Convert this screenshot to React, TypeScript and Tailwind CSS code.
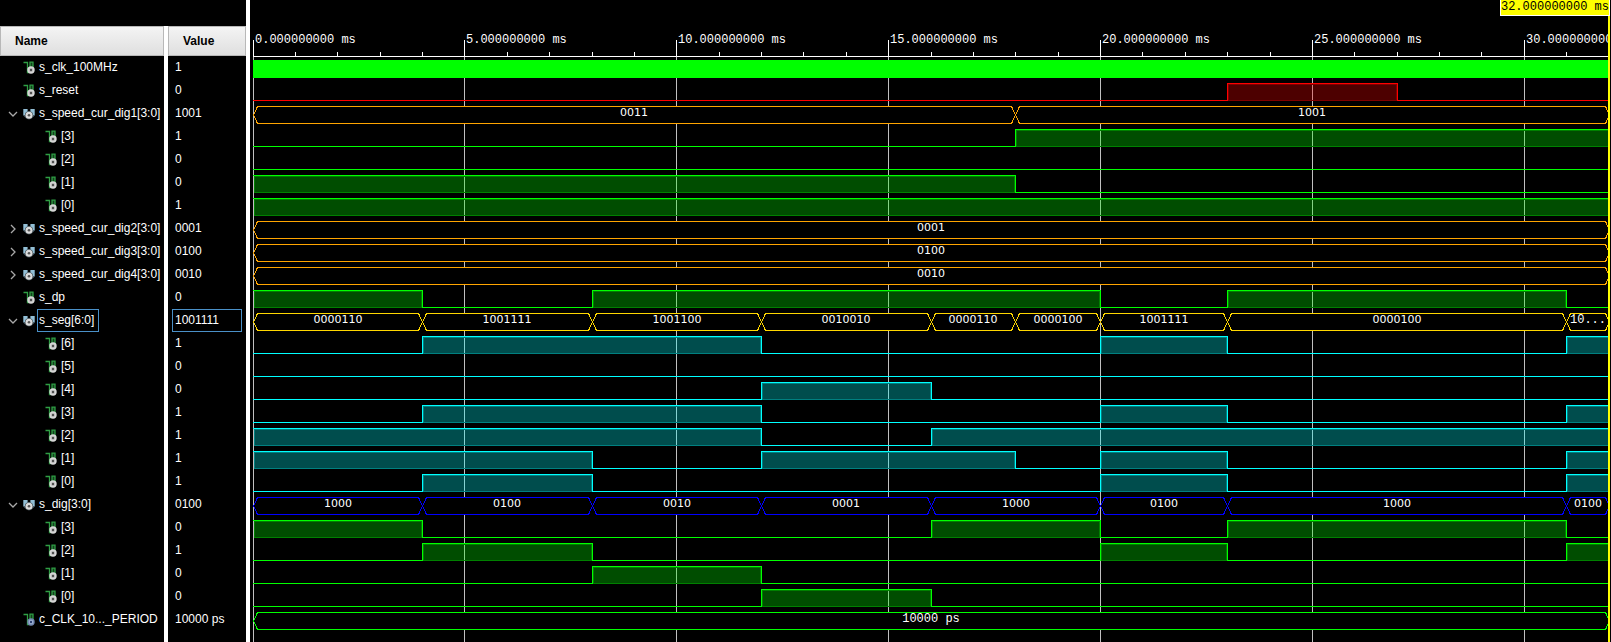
import { useLayoutEffect, useRef, useState } from "react";

type Tone = { line: string; soft: string };

const GREEN: Tone = { line: "#00ff00", soft: "#008000" };
const RED: Tone = { line: "#ff0000", soft: "#800000" };
const CYAN: Tone = { line: "#00ffff", soft: "#008080" };
const ORANGE: Tone = { line: "#ffa500", soft: "#805200" };
const GOLD: Tone = { line: "#ffd700", soft: "#806b00" };
const BLUE: Tone = { line: "#0000ff", soft: "#000080" };

type Wave =
  | { kind: "clock"; tone: Tone }
  | { kind: "bit"; tone: Tone; high: [number, number][] }
  | { kind: "bus"; tone: Tone; parts: [number, number, string][] };

type Signal = {
  name: string;
  value: string;
  icon: "bit" | "bus" | "const";
  depth: 0 | 1;
  open?: boolean;
  selected?: boolean;
  wave: Wave;
};

const END = 32;

const bit = (name: string, value: string, tone: Tone, high: [number, number][], depth: 0 | 1 = 1): Signal => ({
  name,
  value,
  icon: "bit",
  depth,
  wave: { kind: "bit", tone, high },
});

const bus = (
  name: string,
  value: string,
  tone: Tone,
  parts: [number, number, string][],
  open: boolean,
  selected = false,
): Signal => ({ name, value, icon: "bus", depth: 0, open, selected, wave: { kind: "bus", tone, parts } });

const SIGNALS: Signal[] = [
  { name: "s_clk_100MHz", value: "1", icon: "bit", depth: 0, wave: { kind: "clock", tone: GREEN } },
  bit("s_reset", "0", RED, [[23, 27]], 0),
  bus("s_speed_cur_dig1[3:0]", "1001", ORANGE, [[0, 18, "0011"], [18, END, "1001"]], true),
  bit("[3]", "1", GREEN, [[18, END]]),
  bit("[2]", "0", GREEN, []),
  bit("[1]", "0", GREEN, [[0, 18]]),
  bit("[0]", "1", GREEN, [[0, END]]),
  bus("s_speed_cur_dig2[3:0]", "0001", ORANGE, [[0, END, "0001"]], false),
  bus("s_speed_cur_dig3[3:0]", "0100", ORANGE, [[0, END, "0100"]], false),
  bus("s_speed_cur_dig4[3:0]", "0010", ORANGE, [[0, END, "0010"]], false),
  bit("s_dp", "0", GREEN, [[0, 4], [8, 20], [23, 31]], 0),
  bus(
    "s_seg[6:0]",
    "1001111",
    GOLD,
    [
      [0, 4, "0000110"],
      [4, 8, "1001111"],
      [8, 12, "1001100"],
      [12, 16, "0010010"],
      [16, 18, "0000110"],
      [18, 20, "0000100"],
      [20, 23, "1001111"],
      [23, 31, "0000100"],
      [31, END, "10..."],
    ],
    true,
    true,
  ),
  bit("[6]", "1", CYAN, [[4, 12], [20, 23], [31, END]]),
  bit("[5]", "0", CYAN, []),
  bit("[4]", "0", CYAN, [[12, 16]]),
  bit("[3]", "1", CYAN, [[4, 12], [20, 23], [31, END]]),
  bit("[2]", "1", CYAN, [[0, 12], [16, END]]),
  bit("[1]", "1", CYAN, [[0, 8], [12, 18], [20, 23], [31, END]]),
  bit("[0]", "1", CYAN, [[4, 8], [20, 23], [31, END]]),
  bus(
    "s_dig[3:0]",
    "0100",
    BLUE,
    [
      [0, 4, "1000"],
      [4, 8, "0100"],
      [8, 12, "0010"],
      [12, 16, "0001"],
      [16, 20, "1000"],
      [20, 23, "0100"],
      [23, 31, "1000"],
      [31, END, "0100"],
    ],
    true,
  ),
  bit("[3]", "0", GREEN, [[0, 4], [16, 20], [23, 31]]),
  bit("[2]", "1", GREEN, [[4, 8], [20, 23], [31, END]]),
  bit("[1]", "0", GREEN, [[8, 12]]),
  bit("[0]", "0", GREEN, [[12, 16]]),
  {
    name: "c_CLK_10..._PERIOD",
    value: "10000 ps",
    icon: "const",
    depth: 0,
    wave: { kind: "bus", tone: GREEN, parts: [[0, END, "10000 ps"]] },
  },
];

function BitIcon({ constant = false }: { constant?: boolean }) {
  return (
    <svg width="12" height="13" viewBox="0 0 12 13" className="shrink-0" aria-hidden="true">
      <path d="M0.5 1.5H4.5V11.5H6" fill="none" stroke="#2f9e44" strokeWidth="1.3" />
      <path d="M7 7V1.2H10V7" fill="#14401d" stroke="#2f9e44" strokeWidth="1.3" />
      <circle cx="8" cy="9" r="3.7" fill={constant ? "#7388b0" : "#d8d8d8"} />
      <circle cx="8" cy="9" r="2.3" fill={constant ? "#9fb2d6" : "#c4c4c4"} />
      <circle cx="8" cy="9" r="1.2" fill={constant ? "#2c3f70" : "#4d4d4d"} />
    </svg>
  );
}

function BusIcon() {
  return (
    <svg width="12" height="12" viewBox="0 0 12 12" className="shrink-0" aria-hidden="true">
      <path d="M0.3 1H4.6V3.5H7.4V1H11.7V7.6H0.3Z" fill="#93bfd6" />
      <path d="M0.3 7.6H11.7L9.6 9.6H2.4Z" fill="#4f6672" />
      <circle cx="6" cy="7.3" r="4.1" fill="#3f4a50" />
      <circle cx="6" cy="7.3" r="3.5" fill="#dcdcdc" />
      <circle cx="6" cy="7.3" r="1.3" fill="#555555" />
    </svg>
  );
}

function Chevron({ open }: { open: boolean }) {
  return (
    <svg width="10" height="10" viewBox="0 0 10 10" fill="none" stroke="#a8a8a8" strokeWidth="1.3" aria-hidden="true">
      <path d={open ? "M1 3L5 7L9 3" : "M3 1L7 5L3 9"} />
    </svg>
  );
}

function NameCell({ signal }: { signal: Signal }) {
  return (
    <div className={`flex h-[23px] items-center ${signal.depth === 1 ? "pl-[45px]" : "pl-2"}`}>
      {signal.depth === 0 &&
        (signal.open === undefined ? (
          <span className="w-[15px] shrink-0" />
        ) : (
          <button
            type="button"
            aria-label={`${signal.open ? "Collapse" : "Expand"} ${signal.name}`}
            className="flex w-[15px] shrink-0 items-center"
          >
            <Chevron open={signal.open} />
          </button>
        ))}
      {signal.icon === "bus" ? <BusIcon /> : <BitIcon constant={signal.icon === "const"} />}
      <span
        className={`ml-[2px] flex h-[23px] items-center border pb-px pl-px whitespace-nowrap ${
          signal.selected ? "border-[#4a90c8] pr-1" : "border-transparent"
        }`}
      >
        {signal.name}
      </span>
    </div>
  );
}

function ValueCell({ signal }: { signal: Signal }) {
  return (
    <div className="pr-1 pl-1">
      <div
        className={`flex h-[23px] items-center border pb-px pl-[2px] ${
          signal.selected ? "border-[#4a90c8]" : "border-transparent"
        }`}
      >
        {signal.value}
      </div>
    </div>
  );
}

const ROW = 23;
const LEFT = 3;
const FIRST_TOP = 60;
const DIGITS = "font-['DejaVu_Sans',sans-serif] text-[11px]";
const MONO = "font-['Liberation_Mono',monospace] text-[12px]";

function WaveRow({ wave, top, at }: { wave: Wave; top: number; at: (t: number) => number }) {
  const bottom = top + 17;
  const { line, soft } = wave.tone;

  if (wave.kind === "clock") {
    return <rect x={LEFT} y={top} width={at(END) - LEFT} height={18} fill={line} />;
  }

  if (wave.kind === "bit") {
    let path = "";
    let cursor = 0;
    wave.high.forEach(([a, b]) => {
      if (a > cursor) path += `M${at(cursor)} ${bottom + 0.5}H${at(a) + 1}`;
      if (a > 0) path += `M${at(a) + 0.5} ${bottom + 1}V${top}`;
      path += `M${at(a)} ${top + 0.5}H${at(b) + 1}`;
      if (b < END) path += `M${at(b) + 0.5} ${top}V${bottom + 1}`;
      cursor = b;
    });
    if (cursor < END) path += `M${at(cursor)} ${bottom + 0.5}H${at(END)}`;
    return (
      <g>
        {wave.high.map(([a, b]) => (
          <g key={a}>
            <rect
              x={at(a) + 1}
              y={top + 1}
              width={at(b) - at(a) - 1}
              height={17}
              fill={line}
              fillOpacity={0.3}
            />
            <path
              d={`M${at(a) + 1} ${top + 1.5}H${at(b)}M${at(a) + 1.5} ${top + 2}V${bottom}M${at(b) - 0.5} ${top + 2}V${bottom}M${at(a) + 1} ${bottom + 0.5}H${at(b)}`}
              stroke={soft}
            />
          </g>
        ))}
        <path d={path} stroke={line} />
      </g>
    );
  }

  return (
    <g>
      {wave.parts.map(([a, b, label]) => {
        const x1 = at(a) + 0.5;
        const x2 = at(b) + 0.5;
        const y1 = top + 0.5;
        const y2 = bottom + 0.5;
        const mid = (y1 + y2) / 2;
        return (
          <g key={a}>
            <path
              d={`M${x1} ${mid}L${x1 + 4} ${y1}H${x2 - 4}L${x2} ${mid}L${x2 - 4} ${y2}H${x1 + 4}Z`}
              fill="#000000"
              stroke={line}
              shapeRendering="crispEdges"
            />
            <text
              x={Math.floor((x1 + x2) / 2)}
              y={top + 10}
              textAnchor="middle"
              fill="#ffffff"
              className={/^\d+$/.test(label) ? DIGITS : MONO}
            >
              {label}
            </text>
          </g>
        );
      })}
    </g>
  );
}

function WavePane() {
  const host = useRef<HTMLDivElement>(null);
  const [width, setWidth] = useState(1361);

  useLayoutEffect(() => {
    const el = host.current;
    if (!el) return;
    const update = () => setWidth(el.clientWidth);
    update();
    const observer = new ResizeObserver(update);
    observer.observe(el);
    return () => observer.disconnect();
  }, []);

  const span = width - 2 - LEFT;
  const at = (t: number) => LEFT + Math.floor((t / END) * span);
  const ticks = Array.from({ length: END }, (_, i) => i);
  const majors = ticks.filter((t) => t % 5 === 0);
  const end = at(END);

  return (
    <div ref={host} className="relative min-w-0 flex-1 overflow-hidden">
      <svg width={width} height="100%" className="absolute inset-0" role="img" aria-label="Signal waveforms">
        {majors.map((t) => (
          <rect key={t} x={at(t)} y={57} width={1} height="100%" fill="#c0c0c0" />
        ))}
        {SIGNALS.map((s, i) => (
          <WaveRow key={i} wave={s.wave} top={FIRST_TOP + i * ROW} at={at} />
        ))}
        <rect x={LEFT} y={56} width={end - LEFT} height={1} fill="#ffffff" />
        {ticks.map((t) => (
          <rect key={t} x={at(t)} y={t % 5 ? 52 : 40} width={1} height={t % 5 ? 5 : 17} fill="#ffffff" />
        ))}
        {majors.map((t) => (
          <text key={t} x={at(t) + 2} y={43} fill="#ffffff" className={MONO}>
            {t}.000000000 ms
          </text>
        ))}
        <rect x={end - 1} y={0} width={2} height="100%" fill="#ffff00" />
        <rect x={end + 1} y={0} width={1} height="100%" fill="#000000" />
        <rect x={end - 109} y={0} width={110} height={16} fill="#ffffff" />
        <rect x={end - 108} y={0} width={108} height={15} fill="#ffff00" />
        <text x={end} y={10} textAnchor="end" fill="#000000" className={MONO}>
          32.000000000 ms
        </text>
      </svg>
    </div>
  );
}

const HEADER =
  "flex h-[30px] shrink-0 items-center border border-[#b8b8b8] bg-linear-to-b from-[#f4f4f4] to-[#dfdfdf] text-[12px] font-bold text-black";

export default function App() {
  return (
    <div className="flex min-h-screen bg-black font-['Liberation_Sans',Arial,sans-serif] text-[12px] leading-none text-white">
      <div className="flex w-[246px] shrink-0 flex-col pt-[26px]">
        <div className="flex flex-1">
          <section className="w-[164px] shrink-0 overflow-hidden">
            <div className={`${HEADER} pl-[14px]`}>Name</div>
            {SIGNALS.map((s, i) => (
              <NameCell key={i} signal={s} />
            ))}
          </section>
          <div className="w-1 shrink-0 bg-white" />
          <section className="min-w-0 flex-1">
            <div className={`${HEADER} pl-[14px]`}>Value</div>
            {SIGNALS.map((s, i) => (
              <ValueCell key={i} signal={s} />
            ))}
          </section>
        </div>
      </div>
      <div className="w-1 shrink-0 bg-white" />
      <WavePane />
    </div>
  );
}
